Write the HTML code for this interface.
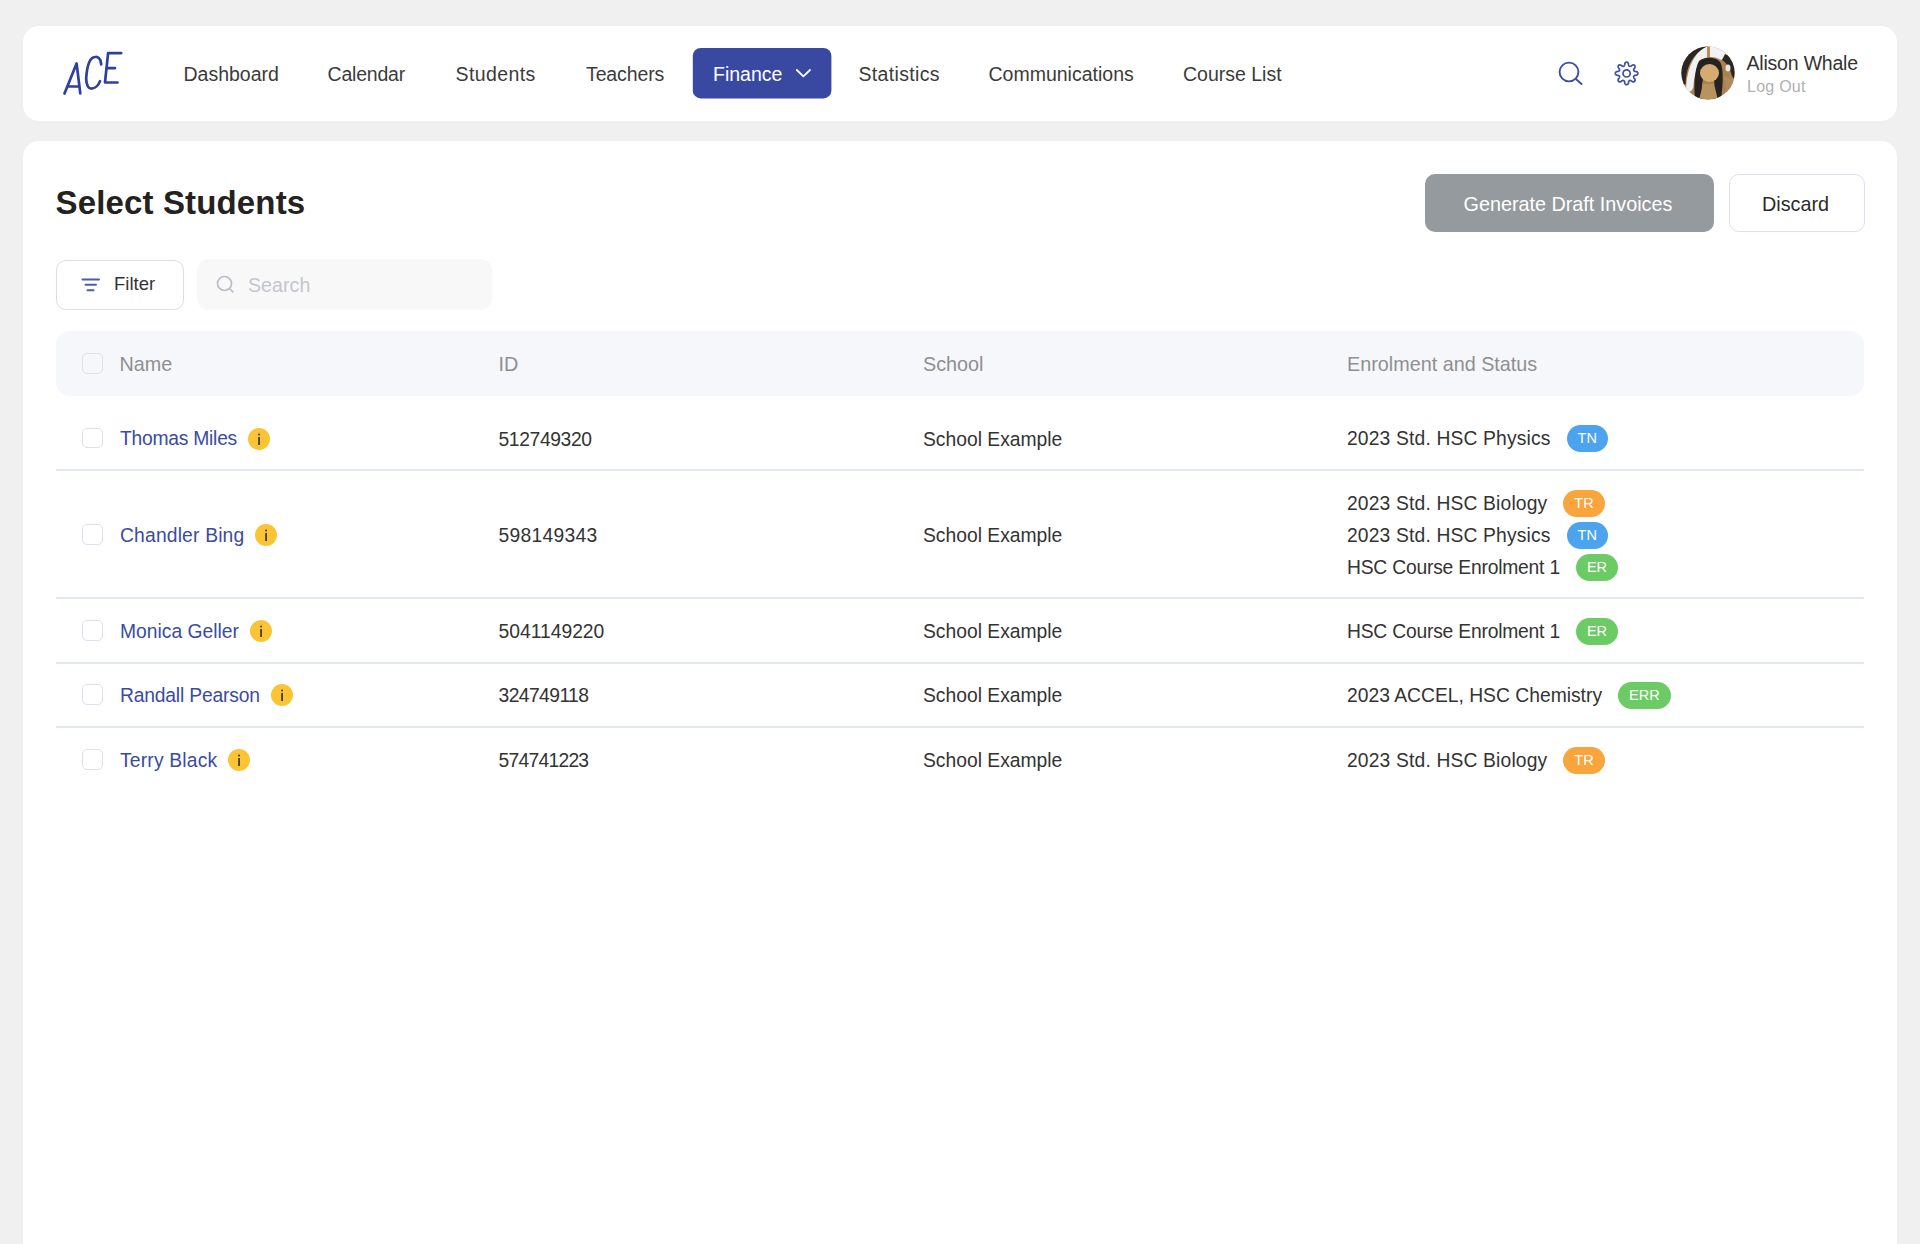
<!DOCTYPE html>
<html><head><meta charset="utf-8"><title>Select Students</title>
<style>
html,body{margin:0;padding:0;}
body{width:1920px;height:1244px;overflow:hidden;background:#f0f0f0;font-family:"Liberation Sans",sans-serif;position:relative;}
.card{position:absolute;background:#fff;}
.t{position:absolute;white-space:nowrap;}
.cb{position:absolute;width:18.6px;height:18.6px;border:1.7px solid #dde1ef;border-radius:5px;box-sizing:content-box;}
.nm{position:absolute;white-space:nowrap;font-size:19.3px;height:27px;line-height:27px;color:#3a4ba3;display:flex;align-items:center;}
.info{display:inline-block;width:22px;height:22px;border-radius:50%;background:#fbc435;margin-left:11px;}
.info svg{display:block}
.en{position:absolute;white-space:nowrap;font-size:19.3px;height:27px;line-height:27px;color:#333;display:flex;align-items:center;}
.bd{display:inline-block;height:27px;line-height:27px;border-radius:14px;color:#fff;font-size:14.5px;padding:0 11px;margin-left:16px;}
.sep{position:absolute;left:56px;width:1808px;height:2px;background:#e3e6f3;}
</style></head><body>
<div class="card" style="left:23.3px;top:26.3px;width:1874px;height:94.4px;border-radius:16px;"></div>
<div class="card" style="left:23.3px;top:140.8px;width:1874px;height:1200px;border-radius:16px;"></div>
<svg style="position:absolute;left:0;top:0" width="1920" height="320">
  <g fill="none" stroke="#2f3f9e" stroke-width="2.7" stroke-linecap="round" stroke-linejoin="round">
    <path d="M64.5 93.5 L76.6 63.4 L80.3 93.4 M68.5 86.5 L79.4 86.5"/>
    <path d="M101.2 64.4 C101 58 97 56.5 95.6 56.9 C90 57 87 66 86.2 78 C86 86 89 88.7 91.3 88.7 C95 88.7 98.5 85 100 81.2"/>
    <path d="M121.2 53.1 L108.1 53.1 L105 82.5 L117.5 82.5 M106.6 68.1 L115 68.1"/>
  </g>
  <rect x="692.8" y="48" width="138.6" height="50.4" rx="8" fill="#3949a1"/>
  <path d="M796.8 70 L803.4 76.4 L810 70" fill="none" stroke="#fff" stroke-width="1.8" stroke-linecap="round" stroke-linejoin="round"/>
  <g fill="none" stroke="#3d4ea5" stroke-width="1.9" stroke-linecap="round">
    <circle cx="1569" cy="72" r="9.4"/>
    <path d="M1576.2 79.2 L1581.5 84"/>
  </g>
  <g fill="none" stroke="#3d4ea5" stroke-width="1.7" stroke-linejoin="round">
    <path d="M1626.60 62.10 L1626.90 62.13 L1627.19 62.21 L1627.47 62.35 L1627.74 62.55 L1628.00 62.80 L1628.23 63.14 L1628.42 63.60 L1628.48 64.56 L1628.61 65.03 L1628.75 65.37 L1628.90 65.65 L1629.05 65.87 L1629.20 66.05 L1629.37 66.19 L1629.55 66.29 L1629.74 66.34 L1629.96 66.36 L1630.19 66.35 L1630.46 66.29 L1630.76 66.20 L1631.10 66.06 L1631.52 65.82 L1632.24 65.19 L1632.71 64.99 L1633.11 64.92 L1633.47 64.92 L1633.80 64.97 L1634.10 65.07 L1634.36 65.22 L1634.59 65.41 L1634.78 65.64 L1634.93 65.90 L1635.03 66.20 L1635.08 66.53 L1635.08 66.89 L1635.01 67.29 L1634.81 67.76 L1634.18 68.48 L1633.94 68.90 L1633.80 69.24 L1633.71 69.54 L1633.65 69.81 L1633.64 70.04 L1633.66 70.26 L1633.71 70.45 L1633.81 70.63 L1633.95 70.80 L1634.13 70.95 L1634.35 71.10 L1634.63 71.25 L1634.97 71.39 L1635.44 71.52 L1636.40 71.58 L1636.86 71.77 L1637.20 72.00 L1637.45 72.26 L1637.65 72.53 L1637.79 72.81 L1637.87 73.10 L1637.90 73.40 L1637.87 73.70 L1637.79 73.99 L1637.65 74.27 L1637.45 74.54 L1637.20 74.80 L1636.86 75.03 L1636.40 75.22 L1635.44 75.28 L1634.97 75.41 L1634.63 75.55 L1634.35 75.70 L1634.13 75.85 L1633.95 76.00 L1633.81 76.17 L1633.71 76.35 L1633.66 76.54 L1633.64 76.76 L1633.65 76.99 L1633.71 77.26 L1633.80 77.56 L1633.94 77.90 L1634.18 78.32 L1634.81 79.04 L1635.01 79.51 L1635.08 79.91 L1635.08 80.27 L1635.03 80.60 L1634.93 80.90 L1634.78 81.16 L1634.59 81.39 L1634.36 81.58 L1634.10 81.73 L1633.80 81.83 L1633.47 81.88 L1633.11 81.88 L1632.71 81.81 L1632.24 81.61 L1631.52 80.98 L1631.10 80.74 L1630.76 80.60 L1630.46 80.51 L1630.19 80.45 L1629.96 80.44 L1629.74 80.46 L1629.55 80.51 L1629.37 80.61 L1629.20 80.75 L1629.05 80.93 L1628.90 81.15 L1628.75 81.43 L1628.61 81.77 L1628.48 82.24 L1628.42 83.20 L1628.23 83.66 L1628.00 84.00 L1627.74 84.25 L1627.47 84.45 L1627.19 84.59 L1626.90 84.67 L1626.60 84.70 L1626.30 84.67 L1626.01 84.59 L1625.73 84.45 L1625.46 84.25 L1625.20 84.00 L1624.97 83.66 L1624.78 83.20 L1624.72 82.24 L1624.59 81.77 L1624.45 81.43 L1624.30 81.15 L1624.15 80.93 L1624.00 80.75 L1623.83 80.61 L1623.65 80.51 L1623.46 80.46 L1623.24 80.44 L1623.01 80.45 L1622.74 80.51 L1622.44 80.60 L1622.10 80.74 L1621.68 80.98 L1620.96 81.61 L1620.49 81.81 L1620.09 81.88 L1619.73 81.88 L1619.40 81.83 L1619.10 81.73 L1618.84 81.58 L1618.61 81.39 L1618.42 81.16 L1618.27 80.90 L1618.17 80.60 L1618.12 80.27 L1618.12 79.91 L1618.19 79.51 L1618.39 79.04 L1619.02 78.32 L1619.26 77.90 L1619.40 77.56 L1619.49 77.26 L1619.55 76.99 L1619.56 76.76 L1619.54 76.54 L1619.49 76.35 L1619.39 76.17 L1619.25 76.00 L1619.07 75.85 L1618.85 75.70 L1618.57 75.55 L1618.23 75.41 L1617.76 75.28 L1616.80 75.22 L1616.34 75.03 L1616.00 74.80 L1615.75 74.54 L1615.55 74.27 L1615.41 73.99 L1615.33 73.70 L1615.30 73.40 L1615.33 73.10 L1615.41 72.81 L1615.55 72.53 L1615.75 72.26 L1616.00 72.00 L1616.34 71.77 L1616.80 71.58 L1617.76 71.52 L1618.23 71.39 L1618.57 71.25 L1618.85 71.10 L1619.07 70.95 L1619.25 70.80 L1619.39 70.63 L1619.49 70.45 L1619.54 70.26 L1619.56 70.04 L1619.55 69.81 L1619.49 69.54 L1619.40 69.24 L1619.26 68.90 L1619.02 68.48 L1618.39 67.76 L1618.19 67.29 L1618.12 66.89 L1618.12 66.53 L1618.17 66.20 L1618.27 65.90 L1618.42 65.64 L1618.61 65.41 L1618.84 65.22 L1619.10 65.07 L1619.40 64.97 L1619.73 64.92 L1620.09 64.92 L1620.49 64.99 L1620.96 65.19 L1621.68 65.82 L1622.10 66.06 L1622.44 66.20 L1622.74 66.29 L1623.01 66.35 L1623.24 66.36 L1623.46 66.34 L1623.65 66.29 L1623.83 66.19 L1624.00 66.05 L1624.15 65.87 L1624.30 65.65 L1624.45 65.37 L1624.59 65.03 L1624.72 64.56 L1624.78 63.60 L1624.97 63.14 L1625.20 62.80 L1625.46 62.55 L1625.73 62.35 L1626.01 62.21 L1626.30 62.13 L1626.60 62.10Z"/>
    <circle cx="1626.6" cy="73.4" r="3.6"/>
  </g>
</svg>
<div class="card" style="left:1425px;top:174px;width:289px;height:58px;border-radius:10px;background:#959a9e"></div>
<div class="card" style="left:1729px;top:174px;width:134px;height:56px;border-radius:10px;border:1.6px solid #dce0f4;box-sizing:content-box"></div>
<div class="card" style="left:56px;top:260px;width:126px;height:48px;border-radius:10px;border:1.6px solid #d9ddf2;box-sizing:content-box"></div>
<div class="card" style="left:197px;top:259px;width:295px;height:51px;border-radius:12px;background:#f8f8f9"></div>
<div class="card" style="left:56px;top:331px;width:1808px;height:65px;border-radius:14px;background:#f6f7fb"></div>
<svg style="position:absolute;left:0;top:250px" width="300" height="60">
  <g stroke="#4d5ba8" stroke-width="2" stroke-linecap="round">
    <path d="M82.5 29.4 H99 M85.5 34.8 H96 M87.5 40.2 H93.5"/>
  </g>
  <g fill="none" stroke="#b9bdc5" stroke-width="1.7" stroke-linecap="round">
    <circle cx="224.5" cy="33.5" r="7"/>
    <path d="M229.5 38.5 L233 42"/>
  </g>
</svg>
<svg style="position:absolute;left:1680.5px;top:46px" width="54" height="54" viewBox="0 0 54 54">
<defs><clipPath id="av"><circle cx="27" cy="27" r="26.6"/></clipPath></defs>
<g clip-path="url(#av)">
<rect width="54" height="54" fill="#a98251"/>
<path d="M24 0 H46 L46 10 L40 14 C34 10 24 10 19 15 C15 22 13 32 12.5 40 C12 44 9 47 5 46 C5 26 11 10 24 0 Z" fill="#f1f1f1"/>
<path d="M27 0 C14 6 5 18 4.6 38 L0 40 V0 Z" fill="#2a2624"/>
<path d="M26 0 L29 0 L29 12 L26 12 Z" fill="#b68c57"/>
<path d="M18 15 C22 11 34 10 39 16 C43 22 42 40 40 54 H31 C33 44 34 38 33 34 L22 34 C20 40 21 46 22 54 H14 C13 42 13 24 18 15 Z" fill="#26221f"/>
<ellipse cx="28.5" cy="27" rx="9.5" ry="9" fill="#d6ab72"/>
<path d="M44 8 C50 10 53 16 54 22 V34 L51 30 C49 22 46 17 41 14 Z" fill="#2a2624"/>
<ellipse cx="47" cy="22" rx="2.5" ry="3.5" fill="#e6e6e6"/>
<path d="M22 38 L33 38 L37 54 H18 Z" fill="#b9935f"/>
<path d="M0 40 L5 46 L10 54 H0 Z" fill="#f4f4f4"/>
<path d="M42 30 L54 34 V54 H44 C46 46 46 38 42 30 Z" fill="#b08a58"/>
</g></svg>
<div class="t " style="left:183.5px;top:62.5px;font-size:19.5px;line-height:22px;color:#3b3b3b;letter-spacing:0px;">Dashboard</div>
<div class="t " style="left:327.5px;top:62.5px;font-size:19.5px;line-height:22px;color:#3b3b3b;letter-spacing:-0.2px;">Calendar</div>
<div class="t " style="left:455.5px;top:62.5px;font-size:19.5px;line-height:22px;color:#3b3b3b;letter-spacing:0.4px;">Students</div>
<div class="t " style="left:586.0px;top:62.5px;font-size:19.5px;line-height:22px;color:#3b3b3b;letter-spacing:-0.12px;">Teachers</div>
<div class="t " style="left:858.5px;top:62.5px;font-size:19.5px;line-height:22px;color:#3b3b3b;letter-spacing:0.33px;">Statistics</div>
<div class="t " style="left:988.5px;top:62.5px;font-size:19.5px;line-height:22px;color:#3b3b3b;letter-spacing:0px;">Communications</div>
<div class="t " style="left:1183.0px;top:62.5px;font-size:19.5px;line-height:22px;color:#3b3b3b;letter-spacing:0px;">Course List</div>
<div class="t " style="left:713px;top:62.5px;font-size:19.5px;line-height:22px;color:#ffffff;">Finance</div>
<div class="t " style="left:1746.5px;top:51.8px;font-size:19.5px;line-height:22px;color:#333333;letter-spacing:-0.2px;">Alison Whale</div>
<div class="t " style="left:1747px;top:78.4px;font-size:16px;line-height:17px;color:#b0b0b0;letter-spacing:0.25px;">Log Out</div>
<div class="t " style="left:55.5px;top:183.75px;font-size:33px;line-height:37px;color:#24211f;font-weight:700;letter-spacing:0.15px;">Select Students</div>
<div class="t " style="left:1463.5px;top:192.75px;font-size:19.8px;line-height:22px;color:#ffffff;">Generate Draft Invoices</div>
<div class="t " style="left:1762px;top:192.75px;font-size:19.8px;line-height:22px;color:#2b2b2b;">Discard</div>
<div class="t " style="left:114px;top:273.25px;font-size:18.5px;line-height:21px;color:#333333;">Filter</div>
<div class="t " style="left:248px;top:273.5px;font-size:19.5px;line-height:22px;color:#c3c6cc;letter-spacing:0.1px;">Search</div>
<div class="t " style="left:119.5px;top:352.6px;font-size:19.8px;line-height:22px;color:#8f8f8f;">Name</div>
<div class="t " style="left:498.5px;top:352.6px;font-size:19.8px;line-height:22px;color:#8f8f8f;">ID</div>
<div class="t " style="left:923px;top:352.6px;font-size:19.8px;line-height:22px;color:#8f8f8f;">School</div>
<div class="t " style="left:1347px;top:352.6px;font-size:19.8px;line-height:22px;color:#8f8f8f;">Enrolment and Status</div>
<div class="cb" style="left:82px;top:353px"></div>
<div class="cb" style="left:82px;top:427.5px"></div>
<div class="nm" style="left:120px;top:425.0px"><span class="nmt" style="letter-spacing:-0.25px">Thomas Miles</span><span class="info"><svg width="22" height="22"><rect x="10.2" y="9" width="1.7" height="8" fill="#3f3522"/><rect x="10.2" y="5.6" width="1.7" height="1.8" fill="#3f3522"/></svg></span></div>
<div class="t " style="left:498.5px;top:428.5px;font-size:19.3px;line-height:21px;color:#333333;letter-spacing:-0.375px;">512749320</div>
<div class="t " style="left:923px;top:428.5px;font-size:19.3px;line-height:21px;color:#333333;">School Example</div>
<div class="en" style="left:1347px;top:425.0px"><span style="letter-spacing:0.15px">2023 Std. HSC Physics</span><span class="bd" style="background:#4ca3ee">TN</span></div>
<div class="cb" style="left:82px;top:524px"></div>
<div class="nm" style="left:120px;top:521.5px"><span class="nmt" style="letter-spacing:0.17px">Chandler Bing</span><span class="info"><svg width="22" height="22"><rect x="10.2" y="9" width="1.7" height="8" fill="#3f3522"/><rect x="10.2" y="5.6" width="1.7" height="1.8" fill="#3f3522"/></svg></span></div>
<div class="t " style="left:498.5px;top:525px;font-size:19.3px;line-height:21px;color:#333333;letter-spacing:0.275px;">598149343</div>
<div class="t " style="left:923px;top:525px;font-size:19.3px;line-height:21px;color:#333333;">School Example</div>
<div class="en" style="left:1347px;top:489.5px"><span style="letter-spacing:0.15px">2023 Std. HSC Biology</span><span class="bd" style="background:#f9a53b">TR</span></div>
<div class="en" style="left:1347px;top:521.5px"><span style="letter-spacing:0.15px">2023 Std. HSC Physics</span><span class="bd" style="background:#4ca3ee">TN</span></div>
<div class="en" style="left:1347px;top:553.5px"><span style="letter-spacing:-0.21px">HSC Course Enrolment 1</span><span class="bd" style="background:#6ccb64">ER</span></div>
<div class="cb" style="left:82px;top:620.2px"></div>
<div class="nm" style="left:120px;top:617.7px"><span class="nmt" style="letter-spacing:0px">Monica Geller</span><span class="info"><svg width="22" height="22"><rect x="10.2" y="9" width="1.7" height="8" fill="#3f3522"/><rect x="10.2" y="5.6" width="1.7" height="1.8" fill="#3f3522"/></svg></span></div>
<div class="t " style="left:498.5px;top:621.2px;font-size:19.3px;line-height:21px;color:#333333;letter-spacing:0px;">5041149220</div>
<div class="t " style="left:923px;top:621.2px;font-size:19.3px;line-height:21px;color:#333333;">School Example</div>
<div class="en" style="left:1347px;top:617.7px"><span style="letter-spacing:-0.21px">HSC Course Enrolment 1</span><span class="bd" style="background:#6ccb64">ER</span></div>
<div class="cb" style="left:82px;top:684.3px"></div>
<div class="nm" style="left:120px;top:681.8px"><span class="nmt" style="letter-spacing:-0.19px">Randall Pearson</span><span class="info"><svg width="22" height="22"><rect x="10.2" y="9" width="1.7" height="8" fill="#3f3522"/><rect x="10.2" y="5.6" width="1.7" height="1.8" fill="#3f3522"/></svg></span></div>
<div class="t " style="left:498.5px;top:685.3px;font-size:19.3px;line-height:21px;color:#333333;letter-spacing:-0.575px;">324749118</div>
<div class="t " style="left:923px;top:685.3px;font-size:19.3px;line-height:21px;color:#333333;">School Example</div>
<div class="en" style="left:1347px;top:681.8px"><span style="letter-spacing:0px">2023 ACCEL, HSC Chemistry</span><span class="bd" style="background:#6ccb64">ERR</span></div>
<div class="cb" style="left:82px;top:749px"></div>
<div class="nm" style="left:120px;top:746.5px"><span class="nmt" style="letter-spacing:0.18px">Terry Black</span><span class="info"><svg width="22" height="22"><rect x="10.2" y="9" width="1.7" height="8" fill="#3f3522"/><rect x="10.2" y="5.6" width="1.7" height="1.8" fill="#3f3522"/></svg></span></div>
<div class="t " style="left:498.5px;top:750px;font-size:19.3px;line-height:21px;color:#333333;letter-spacing:-0.74px;">574741223</div>
<div class="t " style="left:923px;top:750px;font-size:19.3px;line-height:21px;color:#333333;">School Example</div>
<div class="en" style="left:1347px;top:746.5px"><span style="letter-spacing:0.15px">2023 Std. HSC Biology</span><span class="bd" style="background:#f9a53b">TR</span></div>
<div class="sep" style="top:469px"></div>
<div class="sep" style="top:597px"></div>
<div class="sep" style="top:662.3px"></div>
<div class="sep" style="top:726px"></div>

</body></html>
